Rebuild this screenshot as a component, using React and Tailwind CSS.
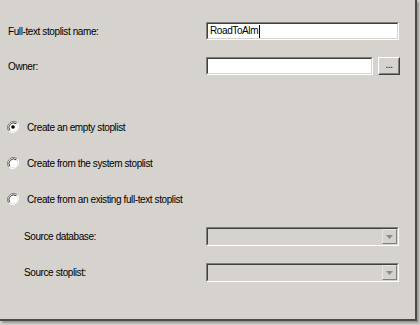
import { useState } from 'react'

function Sunken({ className = '', children, disabled }) {
  return (
    <div
      className={`border border-t-[#808080] border-l-[#808080] border-b-white border-r-white ${disabled ? 'bg-[#d6d3ce]' : 'bg-white'} ${className}`}
    >
      <div className="h-full w-full border border-t-[#404040] border-l-[#404040] border-b-[#d6d3ce] border-r-[#d6d3ce]">
        {children}
      </div>
    </div>
  )
}

function Radio({ checked, label }) {
  return (
    <div className="flex h-[14px] items-center">
      <svg width="12" height="12" viewBox="0 0 12 12" className="ml-[7px] mr-[8px] shrink-0">
        <path d="M10.2 1.8 A6 6 0 0 0 1.8 10.2" fill="none" stroke="#808080" strokeWidth="1" />
        <path d="M1.8 10.2 A6 6 0 0 0 10.2 1.8" fill="none" stroke="#ffffff" strokeWidth="1" />
        <circle cx="6" cy="6" r="4.6" fill="#ffffff" />
        <path d="M9.2 2.8 A4.6 4.6 0 0 0 2.8 9.2" fill="none" stroke="#404040" strokeWidth="1" />
        {checked && <circle cx="6" cy="6" r="1.8" fill="#000000" />}
      </svg>
      <span>{label}</span>
    </div>
  )
}

function Combo({ className = '' }) {
  return (
    <Sunken disabled className={`h-[19px] w-[193px] ${className}`}>
      <div className="flex h-full justify-end">
        <div className="flex w-[15px] items-center justify-center border border-t-[#e8e6e2] border-l-[#e8e6e2] border-b-[#808080] border-r-[#808080] bg-[#d6d3ce]">
          <svg width="7" height="4" viewBox="0 0 7 4">
            <path d="M0 0 H7 L3.5 4 Z" fill="#8a8a8a" />
          </svg>
        </div>
      </div>
    </Sunken>
  )
}

export default function App() {
  const [name] = useState('RoadToAlm')
  const [mode] = useState('empty')

  return (
    <div className="relative h-[325px] w-[420px] bg-[#d6d3ce] font-['Liberation_Sans',Arial,sans-serif] text-[10px] tracking-[-0.4px] text-black">
      <div className="flex h-[321px] w-[417px] flex-col border-b-2 border-r-2 border-[#4a4a4a] pt-[22px] shadow-[2px_2px_2px_rgba(0,0,0,0.3)]">
        {/* Name */}
        <div className="flex h-[18px] items-center">
          <span className="w-[206px] pl-[8px]">Full-text stoplist name:</span>
          <Sunken className="h-[18px] w-[193px]">
            <div className="flex h-full items-center pl-[2px] leading-none">
              {name}
              <span className="ml-[1px] inline-block h-[13px] w-px bg-black" />
            </div>
          </Sunken>
        </div>

        {/* Owner */}
        <div className="mt-[17px] flex h-[18px] items-center">
          <span className="w-[206px] pl-[8px]">Owner:</span>
          <Sunken className="h-[18px] w-[167px]" />
          <button className="ml-[5px] h-[18px] w-[22px] border border-t-white border-l-white border-b-[#404040] border-r-[#404040] bg-[#d6d3ce] p-0 leading-none">
            <div className="flex h-full w-full items-center justify-center border border-t-[#d6d3ce] border-l-[#d6d3ce] border-b-[#808080] border-r-[#808080] pb-[2px] text-[10px]">
              ...
            </div>
          </button>
        </div>

        {/* Options */}
        <div className="mt-[45px]">
          <Radio checked={mode === 'empty'} label="Create an empty stoplist" />
        </div>
        <div className="mt-[22px]">
          <Radio checked={mode === 'system'} label="Create from the system stoplist" />
        </div>
        <div className="mt-[22px]">
          <Radio checked={mode === 'existing'} label="Create from an existing full-text stoplist" />
        </div>

        {/* Source */}
        <div className="mt-[21px] flex h-[19px] items-center">
          <span className="w-[206px] pl-[24px]">Source database:</span>
          <Combo />
        </div>
        <div className="mt-[17px] flex h-[19px] items-center">
          <span className="w-[206px] pl-[24px]">Source stoplist:</span>
          <Combo />
        </div>
      </div>
    </div>
  )
}
